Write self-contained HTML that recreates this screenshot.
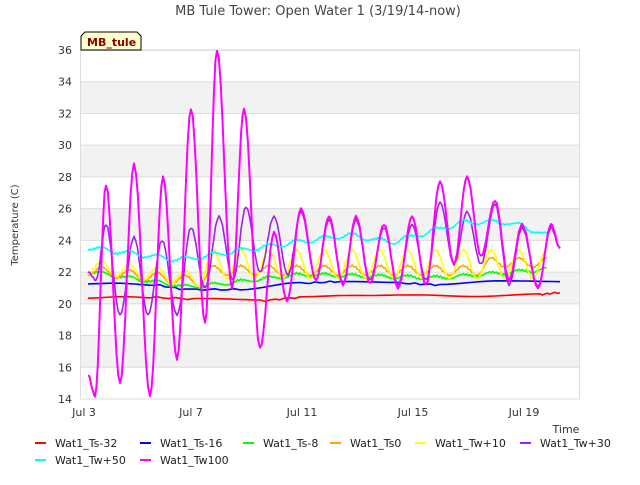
<!DOCTYPE html>
<html><head><meta charset="utf-8"><style>
body{margin:0;background:#fff;font-family:"Liberation Sans","DejaVu Sans",sans-serif}
svg text{font-family:"DejaVu Sans","Liberation Sans",sans-serif}
</style></head><body>
<svg id="s" width="640" height="480" xmlns="http://www.w3.org/2000/svg">
<rect width="640" height="480" fill="#fff"/>
<text x="318" y="15" font-size="13" fill="#444" text-anchor="middle">MB Tule Tower: Open Water 1 (3/19/14-now)</text>
<g fill="#f2f2f2">
<rect x="81" y="82" width="499" height="31.7"/>
<rect x="81" y="145" width="499" height="31.7"/>
<rect x="81" y="209" width="499" height="31.7"/>
<rect x="81" y="272" width="499" height="31.7"/>
<rect x="81" y="336" width="499" height="31.7"/>
</g>
<g stroke="#dcdcdc" stroke-width="1" id="grid"></g>
<rect x="80.5" y="50.5" width="499" height="348.5" fill="none" stroke="#ddd"/>
<g font-size="11" fill="#333" id="yl" text-anchor="end"></g>
<g font-size="11" fill="#333" text-anchor="middle">
<text x="84" y="416">Jul 3</text><text x="191" y="416">Jul 7</text><text x="302" y="416">Jul 11</text><text x="413" y="416">Jul 15</text><text x="524" y="416">Jul 19</text>
<text x="566" y="433">Time</text>
</g>
<text x="18" y="225" font-size="10" fill="#333" text-anchor="middle" transform="rotate(-90 18 225)">Temperature (C)</text>
<g id="lines" fill="none" stroke-width="1.6" stroke-linejoin="round"></g>
<path d="M81 50 L81 36 L85 32 L137 32 L141 36 L141 50 Z" fill="#ffffcc" stroke="#000" stroke-width="1"/>
<text x="87" y="46" font-size="11" font-weight="bold" fill="#8b0000">MB_tule</text>
<g font-size="11" fill="#222">
<rect x="35" y="442" width="11" height="2" fill="#f00"/><text x="55" y="447">Wat1_Ts-32</text>
<rect x="140" y="442" width="11" height="2" fill="#00f"/><text x="160" y="447">Wat1_Ts-16</text>
<rect x="243" y="442" width="11" height="2" fill="#0f0"/><text x="263" y="447">Wat1_Ts-8</text>
<rect x="330" y="442" width="11" height="2" fill="#ffa500"/><text x="350" y="447">Wat1_Ts0</text>
<rect x="415" y="442" width="11" height="2" fill="#ff0"/><text x="435" y="447">Wat1_Tw+10</text>
<rect x="520" y="442" width="11" height="2" fill="#a020f0"/><text x="540" y="447">Wat1_Tw+30</text>
<rect x="35" y="459" width="11" height="2" fill="#0ff"/><text x="55" y="464">Wat1_Tw+50</text>
<rect x="140" y="459" width="11" height="2" fill="#f0f"/><text x="160" y="464">Wat1_Tw100</text>
</g>
</svg>
<script>
var NS="http://www.w3.org/2000/svg";
function Y(v){return 399-(v-14)*15.864;}
var g=document.getElementById('grid'),yl=document.getElementById('yl');
for(var v=14;v<=36;v+=2){var y=Y(v);var l=document.createElementNS(NS,'line');l.setAttribute('x1',81);l.setAttribute('x2',580);l.setAttribute('y1',y);l.setAttribute('y2',y);g.appendChild(l);
var t=document.createElementNS(NS,'text');t.setAttribute('x',72);t.setAttribute('y',y+4);t.textContent=v;yl.appendChild(t);}
function curve(pts,col,w){var d="";for(var i=0;i<pts.length-1;i++){var a=pts[i],b=pts[i+1];for(var s=0;s<=8;s++){var f=s/8,x=a[0]+(b[0]-a[0])*f,k=(1-Math.cos(Math.PI*f))/2,v=a[1]+(b[1]-a[1])*k;v+=Math.sin(x*1.7)*0.05;d+=(d?"L":"M")+x.toFixed(1)+" "+Y(v).toFixed(1);}}
var p=document.createElementNS(NS,'path');p.setAttribute('d',d);p.setAttribute('stroke',col);if(w)p.setAttribute('stroke-width',w);document.getElementById('lines').appendChild(p);}
function osc(x0,x1,base,amp,ph){var p=[];var i=0;for(var x=x0;x<=x1;x+=13.9){p.push([x,base(x)+((i%2)?amp(x):-amp(x)*0.5)]);i++;}return p;}
curve([[88,20.4],[150,20.4],[200,20.3],[260,20.2],[300,20.4],[360,20.5],[420,20.6],[480,20.5],[540,20.6],[560,20.7]],'#f00');
curve([[88,21.3],[150,21.2],[190,20.9],[240,20.9],[300,21.3],[340,21.4],[400,21.3],[440,21.2],[500,21.4],[560,21.4]],'#00f');
curve(osc(88,560,function(x){return x<190?22-(x-88)/102:x<300?21+(x-190)/110*0.8:x<440?21.8-(x-300)/140*0.2:21.6+(x-440)/80*0.4;},function(x){return 0.15;}),'#0f0');
curve(osc(88,560,function(x){return x<200?22-(x-88)/112*0.7:22+(x>480?0.5:0);},function(x){return 0.4;}),'#ffa500');
curve(osc(88,560,function(x){return x<200?22.2-(x-88)/112*0.8:22.2;},function(x){return x<200?0.6:1.2;}),'#ff0');
curve([[88,22],[96,21.5],[106,25],[120,19.3],[134,24.2],[148,19.3],[162,24],[177,19.3],[191,24.8],[205,21],[219,25.5],[233,21.5],[246,26.1],[260,22],[274,25.5],[288,21.8],[301,25.8],[316,21.5],[329,25.3],[343,21.3],[356,25.3],[370,21.5],[384,24.8],[398,21.2],[412,25],[426,21.5],[440,26.4],[454,22.5],[467,25.8],[481,22.5],[495,26.3],[509,21.2],[522,24.8],[538,21.1],[551,24.8],[560,23.5]],'#a020f0');
curve(osc(88,560,function(x){return x<180?23.5-(x-88)/92*0.8:x<260?22.7+(x-180)/80*0.8:x<350?23.5+(x-260)/90*0.8:x<390?24.3-(x-350)/40*0.5:x<470?23.8+(x-390)/80*1.4:x<510?25.1:25.1-(x-510)/50*1.1;},function(x){return 0.2;}),'#0ff');
curve([[88,15.5],[95,14.2],[106,27.5],[120,15],[134,28.8],[150,14.2],[163,28],[177,16.5],[191,32.3],[205,18.8],[217,36],[232,21],[244,32.3],[260,17.2],[274,24.5],[287,20.2],[301,26],[316,21.5],[329,25.5],[343,21.2],[356,25.5],[370,21.3],[384,25],[398,21],[412,25.5],[426,21.2],[440,27.7],[454,22.5],[467,28],[481,23],[495,26.5],[509,21.5],[522,25],[538,21],[551,25],[560,23.5]],'#f0f',2);
</script>
</body></html>
